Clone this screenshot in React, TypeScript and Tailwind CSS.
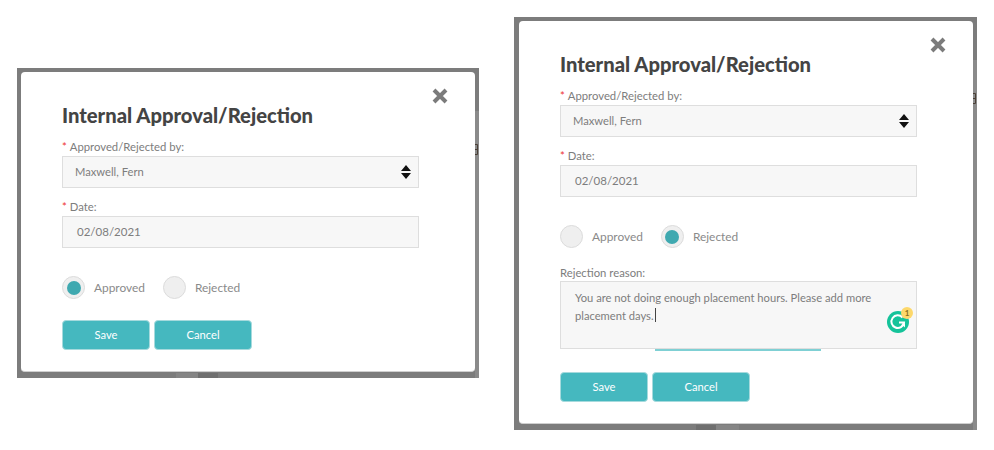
import React from "react";

function Req({ children }: { children: React.ReactNode }) {
  return (
    <div className="h-[13px] text-[11.3px] leading-[13px] text-[#7d7d7d]">
      <span className="text-[#e33] mr-[3px]">*</span>
      {children}
    </div>
  );
}

function Radio({ on, label }: { on: boolean; label: string }) {
  return (
    <div className="flex items-center gap-[9px]">
      <div className="w-[23px] h-[23px] rounded-full bg-[#efefef] border border-[#dcdcdc] flex items-center justify-center">
        {on && <div className="w-[14px] h-[14px] rounded-full bg-[#3fa9b0]" />}
      </div>
      <span className="text-[11.9px] leading-none text-[#8a8a8a]">{label}</span>
    </div>
  );
}

function Btn({ w, children }: { w: string; children: React.ReactNode }) {
  return (
    <div className={`${w} h-[30px] rounded-[4px] bg-[#45b8bf] border border-[#a6dadd] flex items-center justify-center text-white text-[11.2px]`}>
      {children}
    </div>
  );
}

function Grammarly() {
  return (
    <div className="absolute right-[3px] bottom-[15px] w-[26px] h-[26px]">
      <svg width="26" height="26" viewBox="0 0 26 26">
        <circle cx="11" cy="15" r="11" fill="#15c39a" />
        <path d="M15.5 10.5 A6.3 6.3 0 1 0 17 15.5 H12" fill="none" stroke="#fff" strokeWidth="2" />
        <path d="M14.5 17 L18 20.5 L18 16 Z" fill="#fff" />
      </svg>
      <div className="absolute right-0 top-0 w-[12px] h-[12px] rounded-full bg-[#fdd86b] flex items-center justify-center text-[8px] font-bold leading-none text-[#8a6d1d]">
        1
      </div>
    </div>
  );
}

function Dialog({ rejected, className }: { rejected: boolean; className: string }) {
  return (
    <div className={`${className} relative bg-[#7c7c7c] pt-[4px] pr-[4px] pb-[6px]`}>
      {/* page showing faintly around the modal */}
      <div className="absolute right-0 top-[43px] bottom-0 w-[4px] bg-[#8a8a8a]" />
      <svg className="absolute right-0 top-[75px]" width="4" height="13" viewBox="0 0 4 13">
        <path d="M0 1.5 H2.5 V11.5 H0 M0 6.5 H2.5" fill="none" stroke="#4a3f36" strokeWidth="1" />
      </svg>
      <div className={`absolute bottom-0 h-[5px] w-[23px] bg-[#858585] ${rejected ? "left-[202px]" : "left-[159px]"}`} />
      <div className={`absolute bottom-0 h-[5px] w-[20px] bg-[#6f6f6f] ${rejected ? "left-[182px]" : "left-[181px]"}`} />

      <div className="relative w-[454px] bg-white rounded-[4px] border-b border-[#cfcfcf] pl-[41px] pr-[56px] pt-[31px] pb-[21px]">
        <svg className="absolute right-[26px] top-[15px]" width="18" height="18" viewBox="0 0 18 18">
          <path d="M3 3 L15 15 M15 3 L3 15" stroke="#7b7b7b" strokeWidth="4" />
        </svg>
        <div className="text-[20.2px] leading-[24px] font-black text-[#444]">Internal Approval/Rejection</div>

        <div className="mt-[13px]"><Req>Approved/Rejected by:</Req></div>
        <div className="mt-[3px] h-[32px] bg-[#f7f7f7] border border-[#dedede] pl-[12px] pr-[7px] flex items-center justify-between text-[11.2px] text-[#7d7d7d]">
          <span>Maxwell, Fern</span>
          <svg width="10" height="14" viewBox="0 0 10 14">
            <path d="M5 0 L10 6 H0 Z M0 8 H10 L5 14 Z" fill="#111" />
          </svg>
        </div>

        <div className="mt-[12px]"><Req>Date:</Req></div>
        <div className="mt-[3px] h-[32px] bg-[#f7f7f7] border border-[#dedede] pl-[14px] flex items-center text-[11.5px] text-[#7d7d7d]">
          02/08/2021
        </div>

        <div className="mt-[28px] flex gap-[18px]">
          <Radio on={!rejected} label="Approved" />
          <Radio on={rejected} label="Rejected" />
        </div>

        {rejected && (
          <>
            <div className="mt-[18px] h-[13px] text-[11.3px] leading-[13px] text-[#7d7d7d]">Rejection reason:</div>
            <div className="relative mt-[2px] h-[68px] bg-[#f7f7f7] border border-[#dedede] pl-[14px] pr-[20px] pt-[7px] text-[11.2px] leading-[17.5px] text-[#7d7d7d]">
              You are not doing enough placement hours. Please add more
              <br />
              placement days.<span className="inline-block w-px h-[14px] bg-[#444] ml-[1px] align-[-2px]" />
              <Grammarly />
              <div className="absolute left-[94px] -bottom-[3px] w-[166px] h-[2px] bg-[#7fd0d4]" />
            </div>
          </>
        )}

        <div className={`${rejected ? "mt-[23px]" : "mt-[21px]"} flex gap-[4px]`}>
          <Btn w="w-[88px]">Save</Btn>
          <Btn w="w-[98px]">Cancel</Btn>
        </div>
      </div>
    </div>
  );
}

export default function App() {
  return (
    <div className="w-[994px] h-[450px] bg-white overflow-hidden flex items-start font-['Lato','Open_Sans',sans-serif]">
      <Dialog rejected={false} className="ml-[17px] mt-[68px] pl-[4px]" />
      <Dialog rejected className="ml-[35px] mt-[17px] pl-[5px]" />
    </div>
  );
}
